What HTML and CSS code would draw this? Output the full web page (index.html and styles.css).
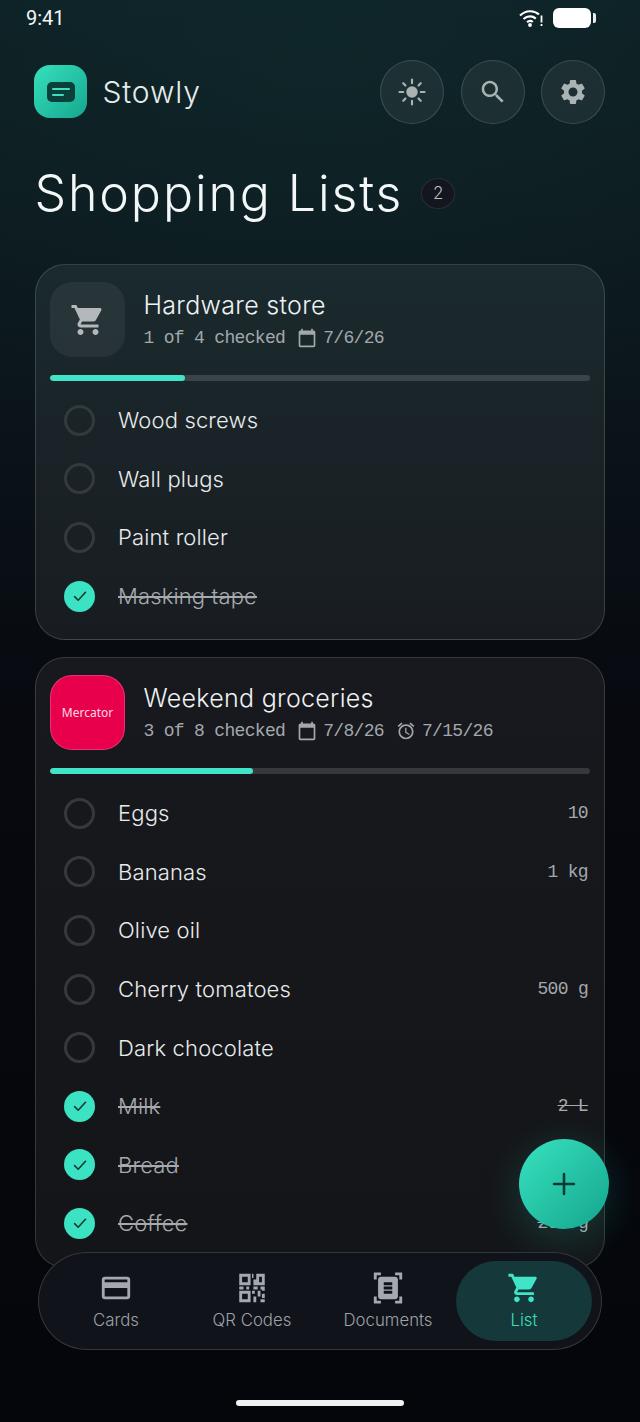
FILE: index.html
```html
<!DOCTYPE html>
<html lang="en">
<head>
<meta charset="utf-8">
<title>Stowly</title>
<link rel="stylesheet" href="styles.css">
</head>
<body>
<svg class="defs" width="0" height="0" aria-hidden="true">
  <symbol id="cart" viewBox="0 0 24 24"><path d="M7 18c-1.100 0-1.990.9-1.990 2S5.900 22 7 22s2-.9 2-2-.9-2-2-2zM1 2v2h2l3.600 7.590-1.350 2.450c-.16.28-.25.61-.25.96 0 1.100.9 2 2 2h12v-2H7.420c-.14 0-.25-.11-.25-.25l.03-.12.9-1.630h7.450c.75 0 1.410-.41 1.750-1.030l3.580-6.490c.08-.14.12-.31.12-.48 0-.55-.45-1-1-1H5.210l-.94-2H1zm16 16c-1.100 0-1.990.9-1.990 2s.89 2 1.990 2 2-.9 2-2-.9-2-2-2z"/></symbol>
  <symbol id="cal" viewBox="0 0 24 24"><path d="M20 3h-1V1h-2v2H7V1H5v2H4c-1.100 0-2 .9-2 2v16c0 1.100.9 2 2 2h16c1.100 0 2-.9 2-2V5c0-1.100-.9-2-2-2zm0 18H4V8h16v13z"/></symbol>
  <symbol id="alarm" viewBox="0 0 24 24"><path d="M22 5.720l-4.600-3.860-1.290 1.530 4.600 3.860L22 5.720zM7.880 3.390L6.600 1.860 2 5.710l1.290 1.530 4.590-3.850zM12.500 8H11v6l4.750 2.850.75-1.230-4-2.370V8zM12 4c-4.970 0-9 4.030-9 9s4.020 9 9 9c4.970 0 9-4.030 9-9s-4.030-9-9-9zm0 16c-3.870 0-7-3.130-7-7s3.130-7 7-7 7 3.130 7 7-3.130 7-7 7z"/></symbol>
  <symbol id="tick" viewBox="0 0 24 24"><path d="M5.500 12.800l4.300 4.300 8.800-9.600" fill="none" stroke="currentColor" stroke-width="1.900" stroke-linecap="round" stroke-linejoin="round"/></symbol>
</svg>
<div class="screen">
  <div class="status">
    <span class="time">9:41</span>
    <span class="status-icons">
      <svg class="wifi" viewBox="0 0 24 18"><path d="M1 6.500C7 1 15 1 20 5.500M4.500 10c4-3.400 9-3.400 12.300-.4M8 13.200c2-1.500 4.300-1.500 5.800-.2" fill="none" stroke="#fff" stroke-width="2.200"/><circle cx="11" cy="16" r="1.900" fill="#fff"/><path d="M22.500 6.500v7M22.500 15v2" stroke="#fff" stroke-width="1.800"/></svg>
      <span class="battery"></span><span class="battery-cap"></span>
    </span>
  </div>
  <header class="top">
    <div class="logo"><span class="logo-card"><i class="l1"></i><i class="l2"></i></span></div>
    <span class="brand">Stowly</span>
    <span class="round-btn">
      <svg viewBox="0 0 24 24"><circle cx="12" cy="12" r="4.600" fill="#aab3b4"/><path d="M12 2v3M12 19v3M2 12h3M19 12h3M5 5l1.800 1.800M17.200 17.200L19 19M19 5l-1.800 1.800M6.800 17.200L5 19" stroke="#aab3b4" stroke-width="1.700" stroke-linecap="round"/></svg>
    </span>
    <span class="round-btn">
      <svg viewBox="0 0 24 24"><path fill="#aab3b4" d="M15.500 14h-.79l-.28-.27C15.410 12.590 16 11.110 16 9.500 16 5.910 13.090 3 9.500 3S3 5.910 3 9.500 5.910 16 9.500 16c1.610 0 3.090-.59 4.230-1.570l.27.28v.79l5 4.990L20.490 19l-4.990-5zm-6 0C7.010 14 5 11.990 5 9.500S7.010 5 9.500 5 14 7.010 14 9.500 11.990 14 9.500 14z"/></svg>
    </span>
    <span class="round-btn">
      <svg viewBox="0 0 24 24"><path fill="#aab3b4" d="M19.140 12.940c.04-.3.06-.61.06-.94 0-.32-.02-.64-.07-.94l2.030-1.580c.18-.14.23-.41.12-.61l-1.920-3.320c-.12-.22-.37-.29-.59-.22l-2.390.96c-.5-.38-1.030-.7-1.620-.94l-.36-2.540c-.04-.24-.24-.41-.48-.41h-3.840c-.24 0-.43.17-.47.41l-.36 2.540c-.59.24-1.130.57-1.620.94l-2.390-.96c-.22-.08-.47 0-.59.22L2.740 8.870c-.12.21-.08.47.12.61l2.030 1.580c-.05.3-.09.63-.09.94s.02.64.07.94l-2.030 1.580c-.18.14-.23.41-.12.61l1.920 3.320c.12.22.37.29.59.22l2.390-.96c.5.38 1.030.7 1.620.94l.36 2.540c.05.24.24.41.48.41h3.840c.24 0 .44-.17.47-.41l.36-2.540c.59-.24 1.130-.56 1.620-.94l2.390.96c.22.08.47 0 .59-.22l1.920-3.320c.12-.22.07-.47-.12-.61l-2.010-1.580zM12 15.600c-1.980 0-3.600-1.620-3.600-3.600s1.620-3.600 3.600-3.600 3.600 1.620 3.600 3.600-1.620 3.600-3.600 3.600z"/></svg>
    </span>
  </header>
  <div class="heading">
    <h1>Shopping Lists</h1>
    <span class="count">2</span>
  </div>

  <section class="card card-a">
    <div class="card-head">
      <div class="thumb"><svg class="thumb-cart"><use href="#cart"/></svg></div>
      <div class="card-info">
        <h2>Hardware store</h2>
        <div class="meta">
          <span>1 of 4 checked</span>
          <span class="meta-date"><svg class="meta-icon"><use href="#cal"/></svg>7/6/26</span>
        </div>
      </div>
    </div>
    <div class="progress"><div class="bar" style="width:25%"></div></div>
    <ul class="rows">
      <li class="row"><span class="box"></span><span class="name">Wood screws</span></li>
      <li class="row"><span class="box"></span><span class="name">Wall plugs</span></li>
      <li class="row"><span class="box"></span><span class="name">Paint roller</span></li>
      <li class="row done"><span class="box"><svg><use href="#tick"/></svg></span><span class="name">Masking tape</span></li>
    </ul>
  </section>

  <section class="card card-b">
    <div class="card-head">
      <div class="thumb thumb-red">Mercator</div>
      <div class="card-info">
        <h2>Weekend groceries</h2>
        <div class="meta">
          <span>3 of 8 checked</span>
          <span class="meta-date"><svg class="meta-icon"><use href="#cal"/></svg>7/8/26</span>
          <span class="meta-date"><svg class="meta-icon"><use href="#alarm"/></svg>7/15/26</span>
        </div>
      </div>
    </div>
    <div class="progress"><div class="bar" style="width:37.500%"></div></div>
    <ul class="rows">
      <li class="row"><span class="box"></span><span class="name">Eggs</span><span class="qty">10</span></li>
      <li class="row"><span class="box"></span><span class="name">Bananas</span><span class="qty">1 kg</span></li>
      <li class="row"><span class="box"></span><span class="name">Olive oil</span></li>
      <li class="row"><span class="box"></span><span class="name">Cherry tomatoes</span><span class="qty">500 g</span></li>
      <li class="row"><span class="box"></span><span class="name">Dark chocolate</span></li>
      <li class="row done"><span class="box"><svg><use href="#tick"/></svg></span><span class="name">Milk</span><span class="qty">2 L</span></li>
      <li class="row done"><span class="box"><svg><use href="#tick"/></svg></span><span class="name">Bread</span></li>
      <li class="row done"><span class="box"><svg><use href="#tick"/></svg></span><span class="name">Coffee</span><span class="qty">200 g</span></li>
    </ul>
  </section>

  <button class="fab" type="button"><svg viewBox="0 0 24 24"><path d="M12 3.500v17M3.500 12h17" stroke="#0b3a35" stroke-width="2.200" stroke-linecap="round"/></svg></button>

  <nav class="nav">
    <a class="tab">
      <svg viewBox="0 0 24 24"><path d="M20 4H4c-1.110 0-1.990.89-1.990 2L2 18c0 1.110.89 2 2 2h16c1.110 0 2-.89 2-2V6c0-1.110-.89-2-2-2zm0 14H4v-6h16v6zm0-10H4V6h16v2z"/></svg>
      <span>Cards</span>
    </a>
    <a class="tab">
      <svg viewBox="0 0 24 24"><path fill-rule="evenodd" d="M3 2h8v8H3zM5 4v4h4V4zM3 14h8v8H3zM5 16v4h4v-4zM15 2h6v8h-8V6h2zM17 4v4h2V4zM12 2h1v3h-1zM3 11h3v2H3zM8 11h2v2H8zM13 11h3v2h-3zM18 11h3v3h-2v-1h-1zM12 14h2v2h-2zM16 14h2v4h-2zM13 18h2v4h-2zM18 20h3v2h-3zM19 16h2v3h-2z"/></svg>
      <span>QR Codes</span>
    </a>
    <a class="tab">
      <svg viewBox="0 0 24 24"><path fill-rule="evenodd" d="M7 3H4v3H2V1h5zM22 6h-2V3h-3V1h5zM7 21v2H2v-5h2v3zM20 18h2v5h-5v-2h3zM7 4h10c1.100 0 2 .9 2 2v12c0 1.100-.9 2-2 2H7c-1.100 0-2-.9-2-2V6c0-1.100.9-2 2-2zM9 8v2h6V8zM9 11v2h6v-2zM9 14v2h6v-2z"/></svg>
      <span>Documents</span>
    </a>
    <a class="tab tab-on">
      <svg><use href="#cart"/></svg>
      <span>List</span>
    </a>
  </nav>
  <div class="home"></div>
</div>
</body>
</html>
```
FILE: styles.css
```css
* { box-sizing: border-box; }
html, body { margin: 0; padding: 0; background: #06070c; }
.defs { position: absolute; }
.screen {
  position: relative;
  width: 640px;
  height: 1422px;
  overflow: hidden;
  display: flex;
  flex-direction: column;
  font-family: Inter, "Noto Sans", sans-serif;
  font-weight: 300;
  color: #eef2f3;
  background:
    radial-gradient(ellipse 560px 420px at 320px 60px, rgba(18, 52, 54, .3), transparent 100%),
    linear-gradient(180deg, #0e2125 0, #0d1c20 180px, #0a1217 480px, #07090f 720px, #05060b 1422px);
}
.status {
  height: 36px;
  flex: none;
  display: flex;
  align-items: center;
  justify-content: space-between;
  padding: 0 44px 0 26px;
}
.time { font-family: Roboto, sans-serif; font-size: 20px; font-weight: 400; color: #f4f6f6; }
.status-icons { display: flex; align-items: center; }
.wifi { width: 24px; height: 18px; margin-right: 10px; }
.battery { width: 38px; height: 20px; border-radius: 6px; background: #fff; }
.battery-cap { width: 3px; height: 10px; margin-left: 2px; border-radius: 0 2px 2px 0; background: #e8ecec; }

.top {
  flex: none;
  height: 64px;
  margin: 24px 35px 0 34px;
  display: flex;
  align-items: center;
  gap: 16.500px;
}
.logo {
  width: 53px;
  height: 53px;
  margin-top: -1px;
  border-radius: 16px;
  background: linear-gradient(135deg, #36e0bd, #15a78e);
  display: flex;
  align-items: center;
  justify-content: center;
  flex: none;
}
.logo-card {
  width: 28px;
  height: 20px;
  border-radius: 5px;
  background: #0b3f3a;
  display: flex;
  flex-direction: column;
  justify-content: center;
  gap: 4px;
  padding-left: 5px;
}
.logo-card i { display: block; height: 2px; border-radius: 1px; background: #3fe0bf; }
.l1 { width: 18px; }
.l2 { width: 12px; }
.brand {
  flex: 1;
  margin-left: -1px;
  font-size: 30px;
  letter-spacing: .85px;
  color: #e6ecec;
}
.round-btn {
  flex: none;
  width: 64px;
  height: 64px;
  border-radius: 50%;
  border: 1.500px solid rgba(255, 255, 255, .14);
  background: rgba(255, 255, 255, .06);
  display: flex;
  align-items: center;
  justify-content: center;
}
.round-btn svg { width: 30px; height: 30px; }

.heading {
  flex: none;
  height: 60px;
  margin: 39px 0 0 34.500px;
  display: flex;
  align-items: center;
  gap: 18px;
}
h1 { margin: 0; font-size: 50px; font-weight: 300; letter-spacing: 1.900px; color: #f3f7f8; line-height: 60px; }
.count {
  width: 34px;
  height: 31px;
  border-radius: 50%;
  background: #14161d;
  border: 1.500px solid rgba(255, 255, 255, .1);
  font-size: 17px;
  color: #b9bfc2;
  display: flex;
  align-items: center;
  justify-content: center;
}

.card {
  flex: none;
  margin: 0 35px;
  padding: 17px 14px 13px;
  border-radius: 30px;
  border: 1.500px solid rgba(255, 255, 255, .15);
}
.card-a {
  margin-top: 41px;
  height: 376px;
  background: linear-gradient(180deg, #1a2a2e 0, #1a2327 50%, #181c21 100%);
}
.card-b {
  margin-top: 17px;
  height: 611px;
  background: linear-gradient(180deg, #17191e, #141518);
}
.card-head { display: flex; align-items: center; gap: 18.500px; height: 75px; }
.thumb {
  flex: none;
  width: 75px;
  height: 75px;
  border-radius: 22px;
  background: rgba(255, 255, 255, .06);
  display: flex;
  align-items: center;
  justify-content: center;
}
.thumb-cart { width: 36px; height: 36px; fill: #b4b8bc; }
.thumb-red {
  background: #e8004d;
  border: 1.500px solid rgba(255, 255, 255, .2);
  color: #fbdce5;
  font-family: "Noto Sans", sans-serif;
  font-size: 12px;
  font-weight: 400;
}
.card-info { min-width: 0; }
h2 { margin: 0; font-size: 25px; font-weight: 300; line-height: 32px; letter-spacing: .3px; color: #eff2f3; }
.meta {
  margin-top: 5px;
  display: flex;
  align-items: center;
  gap: 12px;
  font-family: "Liberation Mono", monospace;
  font-size: 18px;
  font-weight: 400;
  line-height: 24px;
  letter-spacing: -.68px;
  color: #a3a8ac;
  white-space: nowrap;
}
.meta-date { display: inline-flex; align-items: center; gap: 6px; }
.meta-icon { width: 20px; height: 20px; fill: #a3a8ac; }

.progress {
  margin-top: 18px;
  height: 6px;
  border-radius: 3px;
  background: rgba(255, 255, 255, .14);
  overflow: hidden;
}
.bar { height: 6px; border-radius: 3px; background: #3fe5c6; }

.rows { list-style: none; margin: 10px 0 0; padding: 0; }
.row {
  height: 58.600px;
  display: flex;
  align-items: center;
  padding: 0 2px 0 14px;
}
.box {
  flex: none;
  width: 31px;
  height: 31px;
  border-radius: 50%;
  border: 3px solid #34393c;
  display: flex;
  align-items: center;
  justify-content: center;
}
.box svg { width: 20px; height: 20px; color: #123a36; }
.name { flex: 1; margin-left: 23px; font-size: 22px; color: #e8ebec; letter-spacing: .15px; }
.qty {
  font-family: "Liberation Mono", monospace;
  font-size: 18px;
  font-weight: 400;
  letter-spacing: -.68px;
  color: #a3a8ac;
}
.done .box { border: 0; background: #3be3c3; }
.done .name, .done .qty { color: #a6aaad; text-decoration: line-through; }

.fab {
  position: absolute;
  left: 518.500px;
  top: 1139px;
  width: 90px;
  height: 90px;
  padding: 0;
  border: 0;
  border-radius: 50%;
  background: linear-gradient(135deg, #38e2c0, #14a58e);
  box-shadow: 0 10px 44px rgba(40, 220, 190, .2);
  display: flex;
  align-items: center;
  justify-content: center;
}
.fab svg { width: 28px; height: 28px; }

.nav {
  position: absolute;
  left: 38px;
  top: 1252px;
  width: 564px;
  height: 98px;
  border-radius: 49px;
  border: 1.500px solid rgba(255, 255, 255, .15);
  background: #10131a;
  display: grid;
  grid-template-columns: 136px 136px 136px 136px;
  padding: 8px 9px 8px 9px;
  font-size: 16.800px;
}
.tab {
  display: flex;
  flex-direction: column;
  align-items: center;
  justify-content: center;
  gap: 5px;
  padding-bottom: 2px;
  color: #9da1a8;
}
.tab svg { width: 34px; height: 34px; fill: #a5a8b1; }
.tab-on { border-radius: 40px; background: #15393a; color: #3fdcbd; }
.tab-on svg { fill: #3fe5c6; }
.home {
  position: absolute;
  left: 236px;
  top: 1400px;
  width: 168px;
  height: 6px;
  border-radius: 3px;
  background: #f2f2f2;
}
```
